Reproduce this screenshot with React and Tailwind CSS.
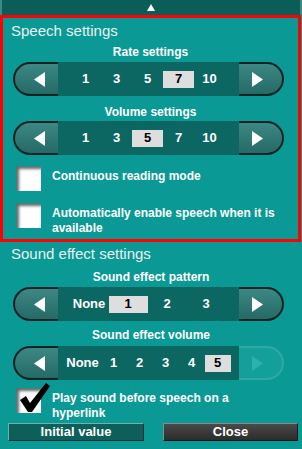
import React from "react";

const font = { fontFamily: '"Liberation Sans", Arial, sans-serif' };

const Arrow = ({ dir = "left", color = "#ffffff" }) => (
  <svg width="11" height="15" viewBox="0 0 11 15">
    {dir === "left" ? (
      <polygon points="11,0 11,15 0,7.5" fill={color} />
    ) : (
      <polygon points="0,0 0,15 11,7.5" fill={color} />
    )}
  </svg>
);

const StepButton = ({ dir, disabled = false }) => {
  const side =
    dir === "left"
      ? "rounded-l-[17px] border-r-0 pl-[6px]"
      : "rounded-r-[17px] border-l-0 pr-[6px]";
  const look = disabled
    ? "border-[#2fa9a4] bg-[#13a09b]"
    : "border-[#0e2322] bg-gradient-to-b from-[#3c8884] to-[#256a66]";
  return (
    <div
      className={`flex h-full w-[45px] items-center justify-center border-2 ${side} ${look}`}
    >
      <Arrow dir={dir} color={disabled ? "#2db1ac" : "#ffffff"} />
    </div>
  );
};

const Selector = ({ items, selected, itemWidths, boxWidth, rightDisabled }) => (
  <div className="ml-[10px] flex h-[34px] w-[271px]">
    <StepButton dir="left" />
    <div className="flex h-full flex-1 items-center justify-center bg-[#0c6762] pr-[2px]">
      {items.map((item, i) => (
        <div
          key={item}
          className="flex items-center justify-center"
          style={{ width: itemWidths[i] }}
        >
          {item === selected ? (
            <span
              className="flex h-[17px] items-center justify-center bg-[#dedede] text-[13px] font-bold text-black"
              style={{ width: boxWidth }}
            >
              {item}
            </span>
          ) : (
            <span className="text-[13px] font-bold text-white">{item}</span>
          )}
        </div>
      ))}
    </div>
    <StepButton dir="right" disabled={rightDisabled} />
  </div>
);

const Checkbox = ({ checked, lines }) => (
  <div className="ml-[13px] flex items-start">
    <div className="relative h-[25px] w-[25px] shrink-0 bg-white shadow-[inset_3px_3px_3px_#5f6f6e]">
      {checked && (
        <svg
          className="absolute left-[2px] top-[-7px]"
          width="34"
          height="33"
          viewBox="0 0 34 33"
        >
          <path
            d="M2 19 L8 15 L12 22 L28 2 L32 5 L14 31 L10 31 Z"
            fill="#000000"
          />
        </svg>
      )}
    </div>
    <div className="ml-[11px] pt-[3px] text-[12px] font-bold leading-[15px] text-white">
      {lines.map((l) => (
        <div key={l}>{l}</div>
      ))}
    </div>
  </div>
);

const Label = ({ children, className = "" }) => (
  <div
    className={`h-[16px] text-center text-[12px] font-bold leading-[16px] text-white ${className}`}
  >
    {children}
  </div>
);

const Title = ({ children, className = "" }) => (
  <div
    className={`h-[16px] pl-[8px] text-[15px] leading-[16px] text-[#e8f2ef] ${className}`}
  >
    {children}
  </div>
);

export default function App() {
  return (
    <div
      className="relative h-[449px] w-[302px] overflow-hidden bg-[#0a9994]"
      style={font}
    >
      {/* top bar */}
      <div className="flex h-[15px] items-start justify-center border-x-2 border-[#3d8a85] bg-[#0b5d58] pt-[4px]">
        <svg width="8" height="7" viewBox="0 0 8 7">
          <polygon points="4,0 8,7 0,7" fill="#ffffff" />
        </svg>
      </div>

      {/* speech settings */}
      <div className="h-[227px] w-[301px] border-[3px] border-[#ff0000]">
        <Title className="mt-[5px]">Speech settings</Title>
        <Label className="mt-[5px]">Rate settings</Label>
        <div className="mt-[2px]">
          <Selector
            items={["1", "3", "5", "7", "10"]}
            selected="7"
            itemWidths={[31, 31, 31, 31, 31]}
            boxWidth={31}
          />
        </div>
        <Label className="mt-[8px]">Volume settings</Label>
        <div className="mt-[1px]">
          <Selector
            items={["1", "3", "5", "7", "10"]}
            selected="5"
            itemWidths={[31, 31, 31, 31, 31]}
            boxWidth={31}
          />
        </div>
        <div className="mt-[11px]">
          <Checkbox lines={["Continuous reading mode"]} />
        </div>
        <div className="mt-[12px]">
          <Checkbox
            lines={["Automatically enable speech when it is", "available"]}
          />
        </div>
      </div>

      {/* sound effect settings */}
      <div className="px-[3px]">
        <Title className="mt-[4px]">Sound effect settings</Title>
        <Label className="mt-[7px]">Sound effect pattern</Label>
        <div className="mt-[2px]">
          <Selector
            items={["None", "1", "2", "3"]}
            selected="1"
            itemWidths={[39, 39, 39, 39]}
            boxWidth={39}
          />
        </div>
        <Label className="mt-[6px]">Sound effect volume</Label>
        <div className="mt-[3px]">
          <Selector
            items={["None", "1", "2", "3", "4", "5"]}
            selected="5"
            itemWidths={[36, 26, 26, 26, 26, 26]}
            boxWidth={26}
            rightDisabled
          />
        </div>
        <div className="mt-[8px]">
          <Checkbox
            checked
            lines={["Play sound before speech on a", "hyperlink"]}
          />
        </div>
      </div>

      {/* bottom buttons */}
      <div className="mt-[2px] flex justify-between pl-[8px] pr-[4px]">
        <button className="flex h-[18px] w-[136px] items-center justify-center border border-b-[#06322f] border-l-[#6fb3ae] border-r-[#06322f] border-t-[#6fb3ae] bg-[#0e5f5a] text-[13px] font-bold text-white">
          Initial value
        </button>
        <button className="flex h-[18px] w-[135px] items-center justify-center border border-b-[#151515] border-l-[#8a8a8a] border-r-[#151515] border-t-[#8a8a8a] bg-gradient-to-b from-[#4a4a4a] to-[#2c2c2c] text-[13px] font-bold text-white">
          Close
        </button>
      </div>
    </div>
  );
}
